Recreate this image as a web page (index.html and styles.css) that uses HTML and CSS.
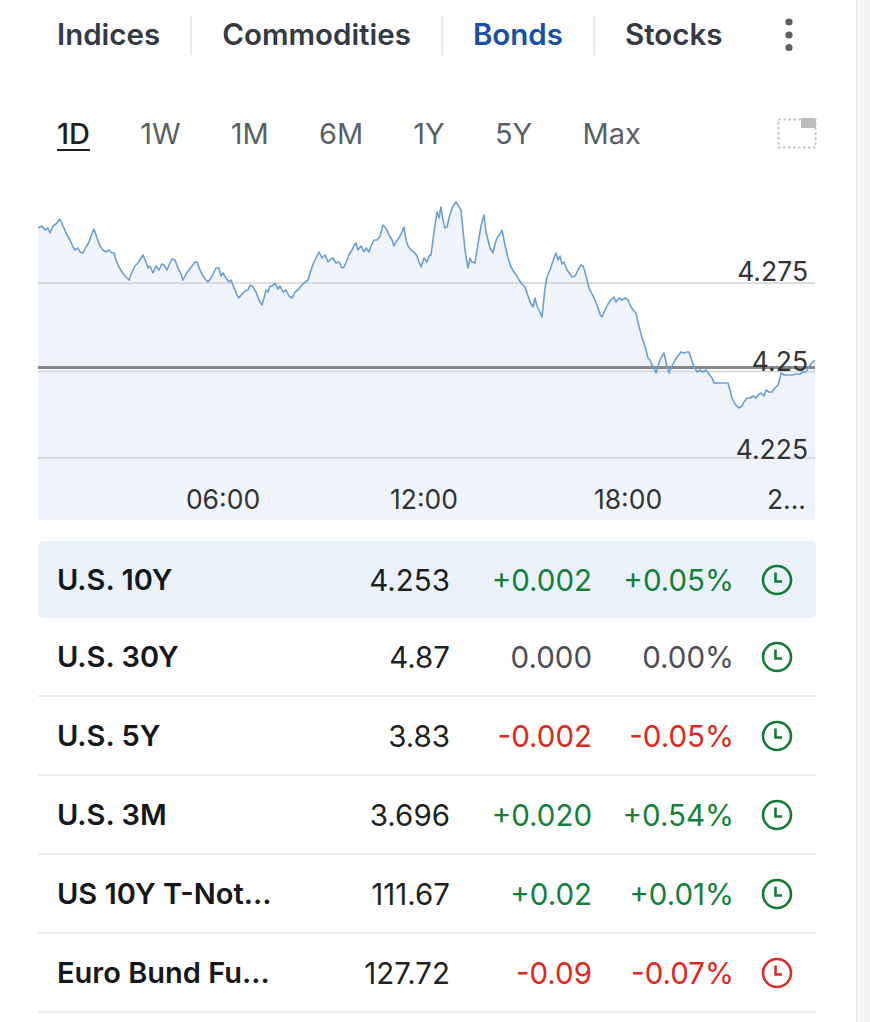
FILE: index.html
```html
<!DOCTYPE html>
<html lang="en">
<head>
<meta charset="utf-8">
<title>Bonds</title>
<link rel="stylesheet" href="styles.css">
</head>
<body>
<div class="page">
  <div class="main">
    <nav class="tabs">
      <span class="tab tab-first">Indices</span>
      <span class="sep"></span>
      <span class="tab">Commodities</span>
      <span class="sep"></span>
      <span class="tab tab-active">Bonds</span>
      <span class="sep"></span>
      <span class="tab">Stocks</span>
      <span class="more">
        <svg width="10" height="34" viewBox="0 0 10 34"><circle cx="5" cy="4" r="3.6" fill="#5a5f66"/><circle cx="5" cy="17" r="3.6" fill="#5a5f66"/><circle cx="5" cy="29.5" r="3.6" fill="#5a5f66"/></svg>
      </span>
    </nav>

    <div class="ranges">
      <span class="range range-active">1D</span>
      <span class="range">1W</span>
      <span class="range">1M</span>
      <span class="range">6M</span>
      <span class="range">1Y</span>
      <span class="range">5Y</span>
      <span class="range">Max</span>
      <span class="expand">
        <svg width="40" height="32" viewBox="0 0 40 32"><rect x="1.5" y="2.5" width="37" height="28" fill="none" stroke="#c4c4c4" stroke-width="2" stroke-dasharray="2.5 2.5"/><path d="M24 1 H36 Q39 1 39 4 V11 H24 Z" fill="#bdbdbd"/></svg>
      </span>
    </div>

    <div class="chart">
      <svg width="777" height="325" viewBox="38 195 777 325">
        <path class="area" d="M38,228 42,226 45,230 48,228 50,233 53,226 56,224 60,219 63,226 66,233 70,240 73,247 75,250 78,248 80,252 83,253 86,247 89,242 91,236 94,229 97,238 100,246 103,250 106,252 109,250 112,253 114,253 116,260 119,267 122,272 125,276 129,280 132,272 135,266 138,263 141,258 143,255 146,262 148,268 150,266 153,273 156,266 159,270 162,264 164,265 167,270 170,263 172,259 175,260 178,268 181,274 183,280 186,274 189,270 192,266 195,262 197,262 200,270 203,276 206,280 208,282 211,278 214,272 216,268 219,268 221,276 223,273 226,278 229,282 231,280 234,288 237,295 239,298 242,294 245,291 248,290 250,285 253,287 256,292 259,300 262,305 264,298 266,290 268,292 270,286 272,286 275,283 278,289 280,286 283,292 286,290 289,296 292,298 295,292 298,290 301,286 304,283 308,280 311,270 314,262 317,256 319,252 322,258 325,255 328,262 331,259 333,258 336,263 339,262 342,268 344,267 347,260 349,255 352,250 354,246 356,243 358,250 361,246 364,252 366,248 369,252 371,246 374,240 377,240 380,236 383,225 386,228 389,235 392,240 394,246 396,242 399,238 402,232 404,227 406,240 408,246 411,250 414,252 417,256 419,262 421,267 424,258 427,262 429,256 431,255 433,240 435,225 437,212 439,218 441,207 443,220 445,228 447,227 449,218 451,212 453,206 456,202 458,205 461,210 463,230 465,250 467,262 468,268 470,258 472,262 475,263 477,250 479,238 481,226 484,215 486,232 488,240 490,248 493,253 495,244 497,238 500,234 502,230 505,245 508,258 511,267 514,272 517,276 519,280 522,284 525,287 528,296 530,302 533,307 535,298 537,306 540,312 542,317 544,298 545,288 547,277 550,270 552,264 554,258 556,253 558,260 560,256 562,264 564,262 567,270 570,274 572,277 575,276 578,270 581,265 583,266 585,272 587,280 589,288 592,294 595,300 598,308 600,314 602,317 605,310 608,304 611,300 614,297 616,302 619,298 622,300 625,298 628,300 630,305 633,310 636,313 638,322 640,330 642,338 644,343 646,350 648,358 650,360 652,365 654,368 656,373 658,366 660,360 662,356 664,353 666,362 668,370 669,373 672,366 675,360 678,356 681,352 684,353 687,352 689,352 691,358 693,364 695,368 697,372 700,370 703,372 706,370 709,374 712,378 714,383 717,383 721,383 725,383 728,383 730,390 732,398 735,404 737,406 739,408 742,406 744,402 747,398 750,398 753,396 756,398 759,394 761,393 764,396 766,390 769,392 772,392 775,388 778,385 780,378 781,373 784,375 788,375 792,375 796,374 800,374 803,372 806,372 808,368 811,364 815,360 L815,520 L38,520 Z"/>
        <line class="grid" x1="38" y1="283" x2="815" y2="283"/>
        <line class="grid" x1="38" y1="458" x2="815" y2="458"/>
        <line class="grid-soft" x1="38" y1="371.5" x2="815" y2="371.5"/>
        <line class="close" x1="38" y1="367.5" x2="815" y2="367.5"/>
        <path class="line" d="M38,228 42,226 45,230 48,228 50,233 53,226 56,224 60,219 63,226 66,233 70,240 73,247 75,250 78,248 80,252 83,253 86,247 89,242 91,236 94,229 97,238 100,246 103,250 106,252 109,250 112,253 114,253 116,260 119,267 122,272 125,276 129,280 132,272 135,266 138,263 141,258 143,255 146,262 148,268 150,266 153,273 156,266 159,270 162,264 164,265 167,270 170,263 172,259 175,260 178,268 181,274 183,280 186,274 189,270 192,266 195,262 197,262 200,270 203,276 206,280 208,282 211,278 214,272 216,268 219,268 221,276 223,273 226,278 229,282 231,280 234,288 237,295 239,298 242,294 245,291 248,290 250,285 253,287 256,292 259,300 262,305 264,298 266,290 268,292 270,286 272,286 275,283 278,289 280,286 283,292 286,290 289,296 292,298 295,292 298,290 301,286 304,283 308,280 311,270 314,262 317,256 319,252 322,258 325,255 328,262 331,259 333,258 336,263 339,262 342,268 344,267 347,260 349,255 352,250 354,246 356,243 358,250 361,246 364,252 366,248 369,252 371,246 374,240 377,240 380,236 383,225 386,228 389,235 392,240 394,246 396,242 399,238 402,232 404,227 406,240 408,246 411,250 414,252 417,256 419,262 421,267 424,258 427,262 429,256 431,255 433,240 435,225 437,212 439,218 441,207 443,220 445,228 447,227 449,218 451,212 453,206 456,202 458,205 461,210 463,230 465,250 467,262 468,268 470,258 472,262 475,263 477,250 479,238 481,226 484,215 486,232 488,240 490,248 493,253 495,244 497,238 500,234 502,230 505,245 508,258 511,267 514,272 517,276 519,280 522,284 525,287 528,296 530,302 533,307 535,298 537,306 540,312 542,317 544,298 545,288 547,277 550,270 552,264 554,258 556,253 558,260 560,256 562,264 564,262 567,270 570,274 572,277 575,276 578,270 581,265 583,266 585,272 587,280 589,288 592,294 595,300 598,308 600,314 602,317 605,310 608,304 611,300 614,297 616,302 619,298 622,300 625,298 628,300 630,305 633,310 636,313 638,322 640,330 642,338 644,343 646,350 648,358 650,360 652,365 654,368 656,373 658,366 660,360 662,356 664,353 666,362 668,370 669,373 672,366 675,360 678,356 681,352 684,353 687,352 689,352 691,358 693,364 695,368 697,372 700,370 703,372 706,370 709,374 712,378 714,383 717,383 721,383 725,383 728,383 730,390 732,398 735,404 737,406 739,408 742,406 744,402 747,398 750,398 753,396 756,398 759,394 761,393 764,396 766,390 769,392 772,392 775,388 778,385 780,378 781,373 784,375 788,375 792,375 796,374 800,374 803,372 806,372 808,368 811,364 815,360"/>
        <text class="ylab" x="808" y="281">4.275</text>
        <text class="ylab" x="808" y="371">4.25</text>
        <text class="ylab" x="808" y="459">4.225</text>
        <text class="xlab" x="223" y="509">06:00</text>
        <text class="xlab" x="424" y="509">12:00</text>
        <text class="xlab" x="628" y="509">18:00</text>
        <text class="xlab xlab-end" x="806" y="509">2...</text>
      </svg>
    </div>

    <div class="table">
      <div class="row row-active">
        <span class="name">U.S. 10Y</span>
        <span class="num">4.253</span>
        <span class="num up">+0.002</span>
        <span class="num up">+0.05%</span>
        <span class="clock up-icon"><svg width="32" height="32" viewBox="0 0 32 32"><circle cx="16" cy="16" r="14" fill="none" stroke="currentColor" stroke-width="2.6"/><path d="M14.5 8.5 V17.5 H21" fill="none" stroke="currentColor" stroke-width="2.6"/></svg></span>
      </div>
      <div class="row">
        <span class="name">U.S. 30Y</span>
        <span class="num">4.87</span>
        <span class="num flat">0.000</span>
        <span class="num flat">0.00%</span>
        <span class="clock up-icon"><svg width="32" height="32" viewBox="0 0 32 32"><circle cx="16" cy="16" r="14" fill="none" stroke="currentColor" stroke-width="2.6"/><path d="M14.5 8.5 V17.5 H21" fill="none" stroke="currentColor" stroke-width="2.6"/></svg></span>
      </div>
      <div class="row">
        <span class="name">U.S. 5Y</span>
        <span class="num">3.83</span>
        <span class="num down">-0.002</span>
        <span class="num down">-0.05%</span>
        <span class="clock up-icon"><svg width="32" height="32" viewBox="0 0 32 32"><circle cx="16" cy="16" r="14" fill="none" stroke="currentColor" stroke-width="2.6"/><path d="M14.5 8.5 V17.5 H21" fill="none" stroke="currentColor" stroke-width="2.6"/></svg></span>
      </div>
      <div class="row">
        <span class="name">U.S. 3M</span>
        <span class="num">3.696</span>
        <span class="num up">+0.020</span>
        <span class="num up">+0.54%</span>
        <span class="clock up-icon"><svg width="32" height="32" viewBox="0 0 32 32"><circle cx="16" cy="16" r="14" fill="none" stroke="currentColor" stroke-width="2.6"/><path d="M14.5 8.5 V17.5 H21" fill="none" stroke="currentColor" stroke-width="2.6"/></svg></span>
      </div>
      <div class="row">
        <span class="name">US 10Y T-Not...</span>
        <span class="num">111.67</span>
        <span class="num up">+0.02</span>
        <span class="num up">+0.01%</span>
        <span class="clock up-icon"><svg width="32" height="32" viewBox="0 0 32 32"><circle cx="16" cy="16" r="14" fill="none" stroke="currentColor" stroke-width="2.6"/><path d="M14.5 8.5 V17.5 H21" fill="none" stroke="currentColor" stroke-width="2.6"/></svg></span>
      </div>
      <div class="row">
        <span class="name">Euro Bund Fu...</span>
        <span class="num">127.72</span>
        <span class="num down">-0.09</span>
        <span class="num down">-0.07%</span>
        <span class="clock down-icon"><svg width="32" height="32" viewBox="0 0 32 32"><circle cx="16" cy="16" r="14" fill="none" stroke="currentColor" stroke-width="2.6"/><path d="M14.5 8.5 V17.5 H21" fill="none" stroke="currentColor" stroke-width="2.6"/></svg></span>
      </div>
    </div>
  </div>
  <div class="track"></div>
</div>
</body>
</html>
```

FILE: styles.css
```css
html, body {
  margin: 0;
  padding: 0;
  background: #ffffff;
}

body {
  font-family: "Inter", "Roboto", "Liberation Sans", sans-serif;
  color: #222;
}

.page {
  display: flex;
  width: 870px;
  min-height: 1022px;
}

.main {
  width: 778px;
  padding: 0 40px 0 38px;
}

.track {
  width: 13px;
  background: #f5f5f5;
  border-left: 1px solid #e7e7e7;
}

/* tabs */
.tabs {
  display: flex;
  align-items: center;
  height: 70px;
}

.tab {
  font-size: 29.5px;
  font-weight: 600;
  color: #333a44;
  padding: 0 30px;
  line-height: 1;
}

.tab-first {
  padding-left: 19px;
}

.tab-active {
  color: #174ea6;
}

.sep {
  width: 2px;
  height: 39px;
  background: #ebebeb;
}

.more {
  margin-left: auto;
  margin-right: 22px;
  display: flex;
}

/* ranges */
.ranges {
  display: flex;
  align-items: center;
  height: 46px;
  margin-top: 40px;
  padding-left: 19px;
  gap: 50.2px;
}

.range {
  font-size: 29px;
  font-weight: 400;
  color: #5a5f66;
  line-height: 1;
}

.range-active {
  color: #1d1f22;
  font-weight: 500;
  text-decoration: underline;
  text-decoration-thickness: 2px;
  text-underline-offset: 5px;
}

.expand {
  margin-left: auto;
  margin-right: -1px;
  display: flex;
}

/* chart */
.chart {
  margin-top: 39px;
}

.chart svg {
  display: block;
}

.area {
  fill: #eff4fb;
  stroke: none;
}

.line {
  fill: none;
  stroke: #6a9fd3;
  stroke-width: 1.6;
  stroke-linejoin: round;
}

.grid {
  stroke: #dcdcdc;
  stroke-width: 2;
}

.grid-soft {
  stroke: #cfd3d8;
  stroke-width: 1.5;
}

.close {
  stroke: #85888c;
  stroke-width: 3;
}

.ylab, .xlab {
  font-family: "Inter", "Roboto", "Liberation Sans", sans-serif;
  font-size: 26.5px;
  fill: #333;
}

.ylab {
  text-anchor: end;
}

.xlab {
  text-anchor: middle;
}

.xlab-end {
  text-anchor: end;
}

/* table */
.table {
  margin-top: 21px;
}

.row {
  display: grid;
  grid-template-columns: 253px 140px 142px 142px 82px;
  align-items: center;
  padding-left: 19px;
  height: 77px;
  border-bottom: 2px solid #ececec;
}

.row-active {
  height: 77px;
  border-bottom: none;
  background: #eaf1fb;
  border-radius: 5px;
}

.name {
  font-size: 29px;
  font-weight: 600;
  color: #15171a;
  white-space: nowrap;
}

.num {
  font-size: 29.5px;
  font-weight: 400;
  color: #1d1f22;
  text-align: right;
}

.up {
  color: #13803a;
}

.down {
  color: #e1261c;
}

.flat {
  color: #4a4f57;
}

.clock {
  display: flex;
  padding-left: 27px;
}

.up-icon {
  color: #137a34;
}

.down-icon {
  color: #dc2b2b;
}
```
